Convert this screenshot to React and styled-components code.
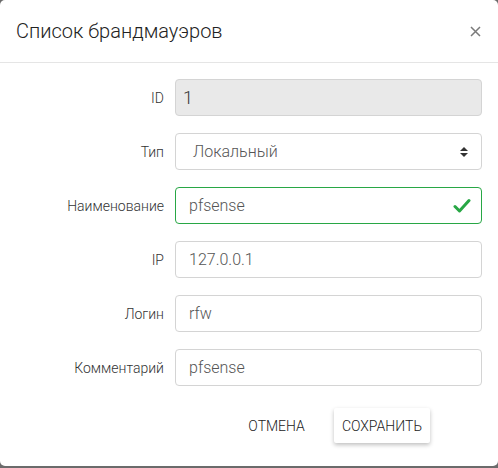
import React from 'react'
import styled, { createGlobalStyle } from 'styled-components'

const Global = createGlobalStyle`
	html, body {
		margin: 0;
		padding: 0;
		background: #6b6b6b;
		font-family: Roboto, 'Noto Sans', sans-serif;
		-webkit-font-smoothing: antialiased;
	}
	* {
		box-sizing: border-box;
	}
`

const fields = [
	{ label: 'ID', value: '1', kind: 'readonly' },
	{ label: 'Тип', value: 'Локальный', kind: 'select' },
	{ label: 'Наименование', value: 'pfsense', kind: 'valid' },
	{ label: 'IP', value: '127.0.0.1' },
	{ label: 'Логин', value: 'rfw' },
	{ label: 'Комментарий', value: 'pfsense' },
]

const App = () => {
	return (
		<>
			<Global />
			<Modal>
				<Header>
					<Title>Список брандмауэров</Title>
					<Close aria-label='close'>
						<svg width='11' height='11' viewBox='0 0 11 11'>
							<path d='M1 1L10 10M10 1L1 10' stroke='#7a7a7a' strokeWidth='1.5' />
						</svg>
					</Close>
				</Header>
				<Form>
					{fields.map((f) => (
						<React.Fragment key={f.label}>
							<Label>{f.label}</Label>
							<Field kind={f.kind}>
								<FieldText kind={f.kind}>{f.value}</FieldText>
								{f.kind === 'select' && (
									<svg width='8' height='10' viewBox='0 0 8 10'>
										<path d='M4 0L8 4H0Z M4 10L0 6H8Z' fill='#333' />
									</svg>
								)}
								{f.kind === 'valid' && (
									<svg width='18' height='16' viewBox='0 0 18 16'>
										<path d='M2 8.5L6.5 13L16 2.5' stroke='#28a745' strokeWidth='3' fill='none' strokeLinecap='round' strokeLinejoin='round' />
									</svg>
								)}
							</Field>
						</React.Fragment>
					))}
				</Form>
				<Footer>
					<Button>Отмена</Button>
					<Button raised>Сохранить</Button>
				</Footer>
			</Modal>
		</>
	)
}

const Modal = styled.div`
	width: 498px;
	height: 466px;
	background: #ffffff;
	border-radius: 5px;
	overflow: hidden;
`
const Header = styled.div`
	height: 63px;
	display: flex;
	align-items: center;
	justify-content: space-between;
	padding: 0 16px 0 16px;
	border-bottom: 1px solid #e5e5e5;
`
const Title = styled.h1`
	margin: 0;
	font-size: 20px;
	font-weight: 300;
	color: #222;
`
const Close = styled.button`
	background: none;
	border: none;
	padding: 0;
	margin-right: 1px;
	margin-top: 1px;
	display: flex;
`
const Form = styled.div`
	display: grid;
	grid-template-columns: 175px 307px;
	grid-auto-rows: 37px;
	row-gap: 17px;
	padding-top: 16px;
	align-items: center;
`
const Label = styled.div`
	text-align: right;
	padding-right: 11px;
	font-size: 14px;
	font-weight: 300;
	color: #333;
`
const Field = styled.div`
	height: 37px;
	display: flex;
	align-items: center;
	justify-content: space-between;
	padding: 0 ${(p) => (p.kind === 'valid' ? '10px' : p.kind === 'select' ? '13px' : '12px')} 0 ${(p) => (p.kind === 'select' ? '17px' : '13px')};
	border: 1px solid ${(p) => (p.kind === 'valid' ? '#28a745' : '#d4d4d4')};
	border-radius: 4px;
	background: ${(p) => (p.kind === 'readonly' ? '#e9e9e9' : '#fff')};
`
const FieldText = styled.span`
	font-size: ${(p) => (p.kind === 'readonly' ? '18px' : '16px')};
	color: ${(p) => (p.kind === 'readonly' ? '#333' : '#555')};
	margin-left: ${(p) => (p.kind === 'readonly' ? '-6px' : '0')};
	font-weight: 300;
`
const Footer = styled.div`
	display: flex;
	justify-content: flex-end;
	align-items: center;
	gap: 21px;
	padding: 22px 68px 0 0;
`
const Button = styled.button`
	height: 35px;
	padding: 0 8px;
	border: none;
	border-radius: 2px;
	background: #fff;
	font-family: Roboto, sans-serif;
	font-size: 14px;
	font-weight: 300;
	text-transform: uppercase;
	color: #222;
	box-shadow: ${(p) => (p.raised ? '0 2px 4px rgba(0,0,0,0.25)' : 'none')};
`

export default App
